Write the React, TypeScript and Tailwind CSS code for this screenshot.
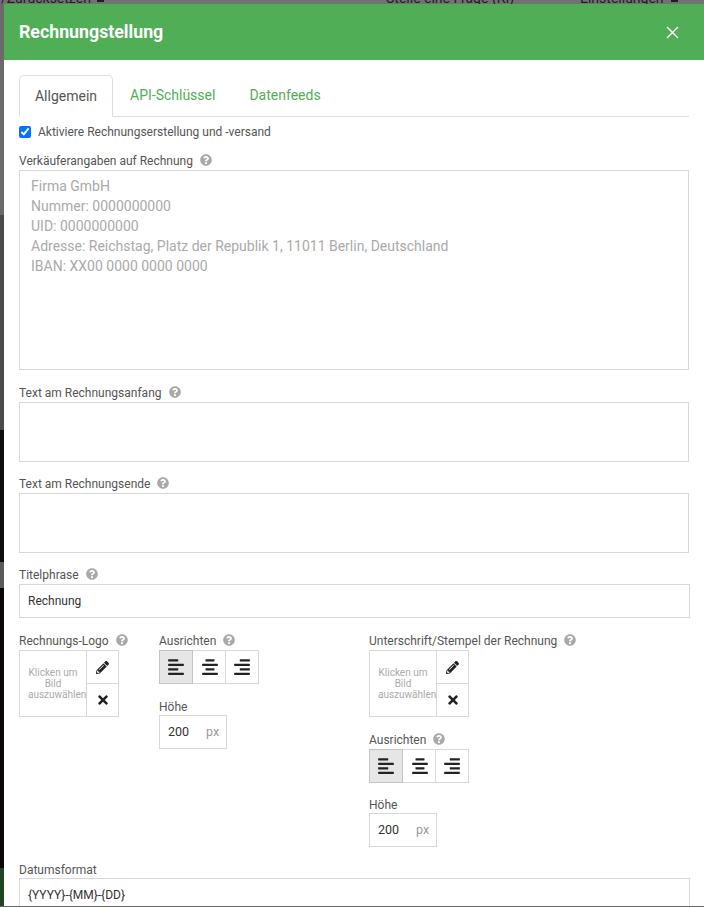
import { FaAlignCenter, FaAlignLeft, FaAlignRight, FaPencilAlt, FaQuestionCircle, FaTimes } from "react-icons/fa";

function Help() {
  return <FaQuestionCircle className="ml-[7px] inline-block text-[12px] text-[#a9a9a9]" />;
}

function Label({ text, help = true }: { text: string; help?: boolean }) {
  return (
    <div className="flex h-[20px] items-center text-[12px] leading-[20px] text-[#555]">
      <span className="mt-[2px]">{text}</span>
      {help && <Help />}
    </div>
  );
}

function ImagePicker() {
  return (
    <div className="flex h-[67px] w-[100px] border border-[#d8d8d8]">
      <div className="flex w-[66px] shrink-0 items-center pl-[8px]">
        <div className="w-[50px] text-center text-[10px] leading-[11px] text-[#aaa]">
          Klicken um Bild auszuwählen
        </div>
      </div>
      <div className="flex flex-1 flex-col border-l border-[#d8d8d8] text-[#222]">
        <div className="flex flex-1 items-center justify-center border-b border-[#d8d8d8] text-[13px]">
          <FaPencilAlt />
        </div>
        <div className="flex flex-1 items-center justify-center text-[14px]">
          <FaTimes />
        </div>
      </div>
    </div>
  );
}

function AlignButtons() {
  return (
    <div className="flex h-[34px] w-[100px] border border-[#d8d8d8] text-[18px] text-[#222]">
      <div className="flex flex-1 items-center justify-center bg-[#e6e6e6] outline outline-[#c4c4c4]">
        <FaAlignLeft />
      </div>
      <div className="flex flex-1 items-center justify-center border-r border-[#d8d8d8] pl-[2px]">
        <FaAlignCenter />
      </div>
      <div className="flex flex-1 items-center justify-center">
        <FaAlignRight />
      </div>
    </div>
  );
}

function HeightInput() {
  return (
    <div className="flex h-[34px] w-[68px] items-center border border-[#d8d8d8] text-[12.5px]">
      <span className="w-[46px] pl-[8px] text-[#333]">200</span>
      <span className="text-[#999]">px</span>
    </div>
  );
}

export default function App() {
  return (
    <div className="flex h-[907px] w-[704px] flex-col overflow-hidden bg-[#0c0c0c] font-['Roboto',sans-serif]">
      <div className="flex h-[4px] shrink-0 items-end overflow-hidden bg-[#727272] text-[14px] leading-[12px] text-[#1e1e1e]">
        <span className="ml-[1px] w-[96px] shrink-0">/Zurücksetzen</span>
        <span className="mb-[2px] h-[2px] w-[7px] shrink-0 bg-[#1e1e1e]" />
        <span className="ml-[282px] w-[194px] shrink-0">Stelle eine Frage (KI)</span>
        <span className="w-[91px] shrink-0">Einstellungen</span>
        <span className="mb-[2px] h-[2px] w-[7px] shrink-0 bg-[#1e1e1e]" />
      </div>
      <div className="flex min-h-0 flex-1">
        <div className="flex w-[4px] shrink-0 flex-col">
          <div className="h-[211px] bg-[#6a6a6a]" />
          <div className="h-[215px] bg-[#4b4b4b]" />
          <div className="h-[132px] bg-[#0c0c0c]" />
          <div className="h-[26px] bg-[#5a5a5a]" />
          <div className="flex-1 bg-[#0a0606]" />
          <div className="h-[38px] bg-[#1f4423]" />
        </div>
        <div className="min-w-0 flex-1 overflow-hidden bg-white">
          <div className="flex h-[56px] items-center justify-between bg-[#50ae56] pl-[15px] pr-[25px] text-white">
            <div className="text-[17.75px] font-bold">Rechnungstellung</div>
            <svg width="13" height="13" viewBox="0 0 13 13" fill="none" stroke="currentColor" strokeWidth="1.4">
              <path d="M1 1l11 11M12 1L1 12" />
            </svg>
          </div>
          <div className="pl-[15px] pr-[15px] pt-[15px]">
            <div className="flex h-[42px] w-[670px] items-end border-b border-[#dedede] text-[14px]">
              <div className="-mb-px flex h-[42px] w-[94px] items-center justify-center rounded-t-[5px] border border-b-white border-[#dedede] bg-white text-[#555]">
                Allgemein
              </div>
              <div className="flex h-[41px] items-center pl-[17px] text-[#50ae56]">API-Schlüssel</div>
              <div className="flex h-[41px] items-center pl-[34px] text-[#50ae56]">Datenfeeds</div>
            </div>
            <label className="mt-[8px] flex h-[14px] items-center text-[12px] text-[#555]">
              <input type="checkbox" defaultChecked className="m-0 mr-[7px] h-[12px] w-[12px] accent-[#0075ff]" />
              Aktiviere Rechnungserstellung und -versand
            </label>
            <div className="mt-[11px]">
              <Label text="Verkäuferangaben auf Rechnung" />
            </div>
            <div className="h-[200px] w-[670px] whitespace-pre-line border border-[#d8d8d8] px-[11px] py-[5px] text-[14px] leading-[20px] text-[#aaa]">
              {"Firma GmbH\nNummer: 0000000000\nUID: 0000000000\nAdresse: Reichstag, Platz der Republik 1, 11011 Berlin, Deutschland\nIBAN: XX00 0000 0000 0000"}
            </div>
            <div className="mt-[12px]">
              <Label text="Text am Rechnungsanfang" />
            </div>
            <div className="h-[60px] w-[670px] border border-[#d8d8d8]" />
            <div className="mt-[11px]">
              <Label text="Text am Rechnungsende" />
            </div>
            <div className="h-[60px] w-[670px] border border-[#d8d8d8]" />
            <div className="mt-[11px]">
              <Label text="Titelphrase" />
            </div>
            <div className="flex h-[34px] w-[671px] items-center border border-[#d8d8d8] pl-[8px] text-[12px] text-[#333]">
              Rechnung
            </div>
            <div className="mt-[12px] flex">
              <div className="w-[140px] shrink-0">
                <Label text="Rechnungs-Logo" />
                <ImagePicker />
              </div>
              <div className="w-[210px] shrink-0">
                <Label text="Ausrichten" />
                <AlignButtons />
                <div className="mt-[12px]">
                  <Label text="Höhe" help={false} />
                </div>
                <div className="-mt-px">
                  <HeightInput />
                </div>
              </div>
              <div>
                <Label text="Unterschrift/Stempel der Rechnung" />
                <ImagePicker />
                <div className="mt-[12px]">
                  <Label text="Ausrichten" />
                </div>
                <AlignButtons />
                <div className="mt-[11px]">
                  <Label text="Höhe" help={false} />
                </div>
                <div className="-mt-px">
                  <HeightInput />
                </div>
              </div>
            </div>
            <div className="mt-[12px]">
              <Label text="Datumsformat" help={false} />
            </div>
            <div className="-mt-px flex h-[34px] w-[671px] items-center border border-[#d8d8d8] pl-[8px] text-[12px] text-[#333]">
              {"{YYYY}-{MM}-{DD}"}
            </div>
          </div>
        </div>
      </div>
      <div className="h-px shrink-0 bg-[#6a6a6a]" />
    </div>
  );
}
